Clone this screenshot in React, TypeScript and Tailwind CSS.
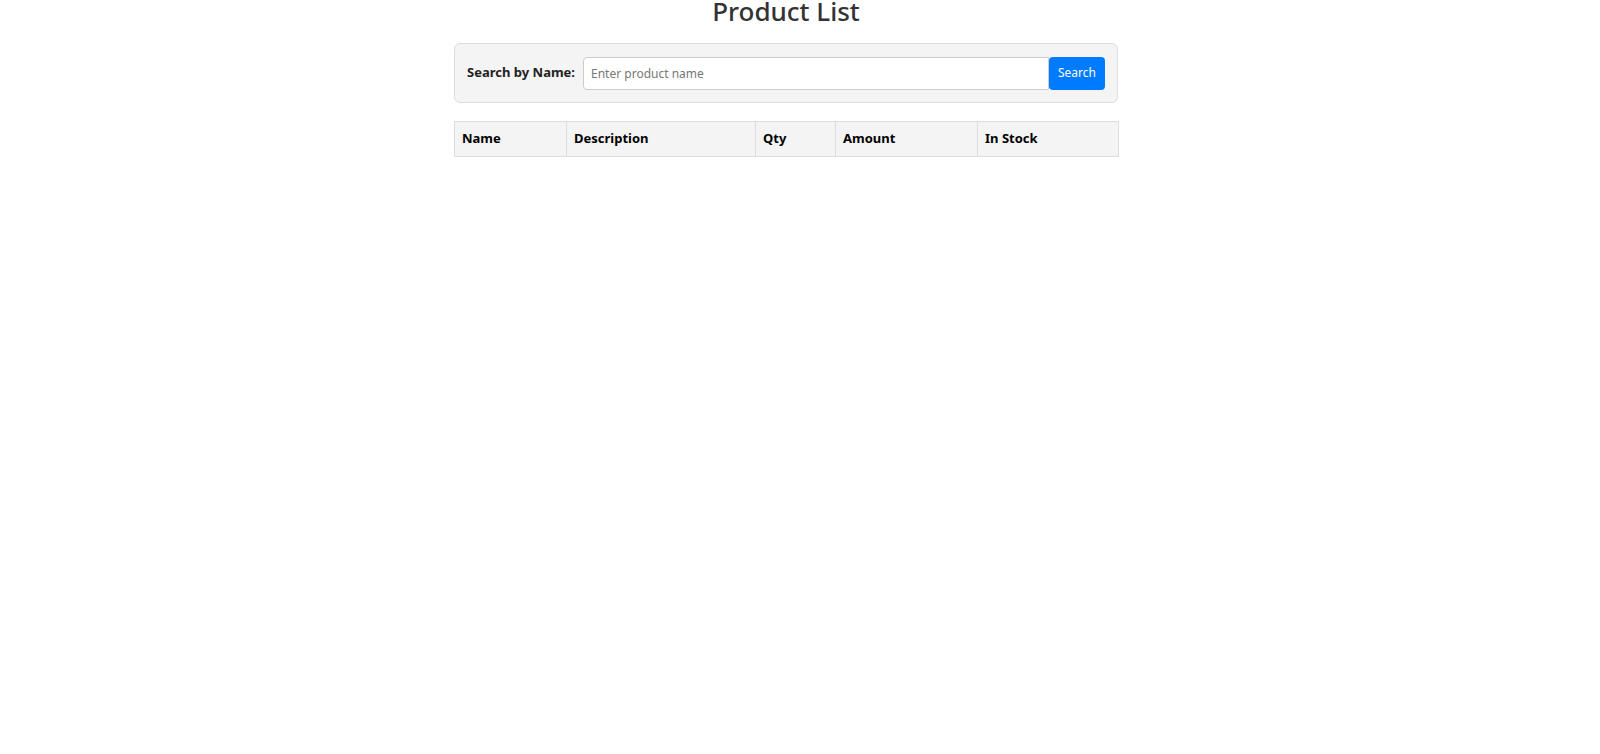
import React from "react";

export default function App() {
  const cols = [
    { label: "Name", w: "w-[112px]" },
    { label: "Description", w: "w-[189px]" },
    { label: "Qty", w: "w-[80px]" },
    { label: "Amount", w: "w-[142px]" },
    { label: "In Stock", w: "w-[141px]" },
  ];
  return (
    <div className="min-h-[754px] w-full bg-white font-['Noto_Sans','Open_Sans',sans-serif]">
      <div className="flex w-full justify-center pr-[28px]">
        <div className="w-[664px]">
          <h1 className="pt-[1px] text-center text-[26px] leading-[20px] font-medium text-[#333333]">
            Product List
          </h1>
          <div className="mt-[22px] flex h-[60px] items-center rounded-[6px] border border-[#dddddd] bg-[#f4f4f4] px-[12px]">
            <label className="mr-[8px] text-[13px] font-bold text-[#222222]">Search by Name:</label>
            <div className="flex flex-1 items-center">
              <input
                type="text"
                placeholder="Enter product name"
                className="h-[33px] flex-1 rounded-l-[4px] border border-[#cccccc] bg-white px-[7px] text-[12px] text-[#333] outline-none placeholder:text-[#777777]"
              />
              <button className="h-[33px] w-[56px] rounded-[4px] bg-[#007bff] text-[12px] text-white">
                Search
              </button>
            </div>
          </div>
          <table className="mt-[18px] w-[664px] table-fixed border-collapse">
            <thead>
              <tr className="bg-[#f4f4f4]">
                {cols.map((c) => (
                  <th
                    key={c.label}
                    className={`${c.w} h-[35px] border border-[#dddddd] px-[7px] text-left text-[13px] font-bold text-black`}
                  >
                    {c.label}
                  </th>
                ))}
              </tr>
            </thead>
            <tbody></tbody>
          </table>
        </div>
      </div>
    </div>
  );
}
